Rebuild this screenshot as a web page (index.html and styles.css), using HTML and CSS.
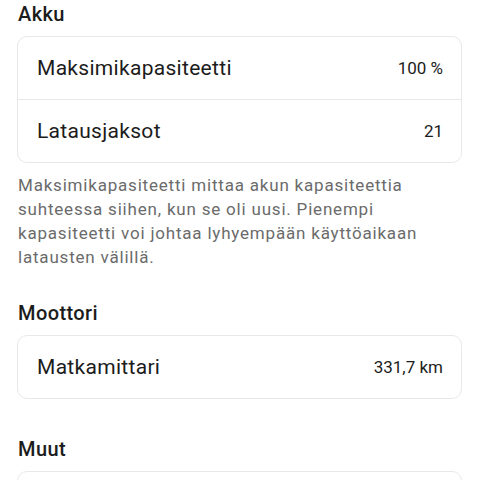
FILE: index.html
```html
<!DOCTYPE html>
<html lang="fi">
<head>
    <meta charset="UTF-8">
    <meta name="viewport" content="width=device-width, initial-scale=1.0">
    <title>Tiedot</title>
    <link rel="stylesheet" href="styles.css">
</head>
<body>

    <!-- Akku -->
    <div class="section has-note">
        <h2>Akku</h2>
        <div class="card">
            <div class="row">
                <span class="label">Maksimikapasiteetti</span>
                <span class="value">100 %</span>
            </div>
            <div class="row">
                <span class="label">Latausjaksot</span>
                <span class="value">21</span>
            </div>
        </div>
        <p class="note">Maksimikapasiteetti mittaa akun kapasiteettia suhteessa siihen, kun se oli uusi. Pienempi kapasiteetti voi johtaa lyhyempään käyttöaikaan latausten välillä.</p>
    </div>

    <!-- Moottori -->
    <div class="section">
        <h2>Moottori</h2>
        <div class="card">
            <div class="row">
                <span class="label">Matkamittari</span>
                <span class="value">331,7 km</span>
            </div>
        </div>
    </div>

    <!-- Muut -->
    <div class="section">
        <h2>Muut</h2>
        <div class="card">
            <div class="row">
                <span class="label">&nbsp;</span>
                <span class="value"></span>
            </div>
        </div>
    </div>

</body>
</html>
```

FILE: styles.css
```css
body {
    font-family: Roboto, 'Liberation Sans', sans-serif;
    background-color: #ffffff;
    color: #1c1c1c;
    margin: 0;
    padding: 0 18px 0 17px;
}
.section {
    margin-bottom: 36px;
}
.section.has-note {
    margin-bottom: 30px;
}
h2 {
    margin: 0;
    font-size: 20px;
    font-weight: 500;
    line-height: 28px;
    letter-spacing: 0.4px;
    padding-left: 1px;
}
.card {
    margin-top: 8px;
    border: 1px solid #e8e8e8;
    border-radius: 10px;
    background-color: white;
}
.row {
    display: flex;
    justify-content: space-between;
    align-items: center;
    height: 62px;
    padding: 0 18px 0 19px;
}
.row + .row {
    border-top: 1px solid #e8e8e8;
}
.label {
    font-size: 21px;
    letter-spacing: 0.3px;
}
.value {
    font-size: 17px;
}
.note {
    margin: 10px 0 0;
    padding-left: 1px;
    max-width: 430px;
    font-size: 17px;
    line-height: 24px;
    letter-spacing: 0.8px;
    color: #6b6b6b;
}
```
